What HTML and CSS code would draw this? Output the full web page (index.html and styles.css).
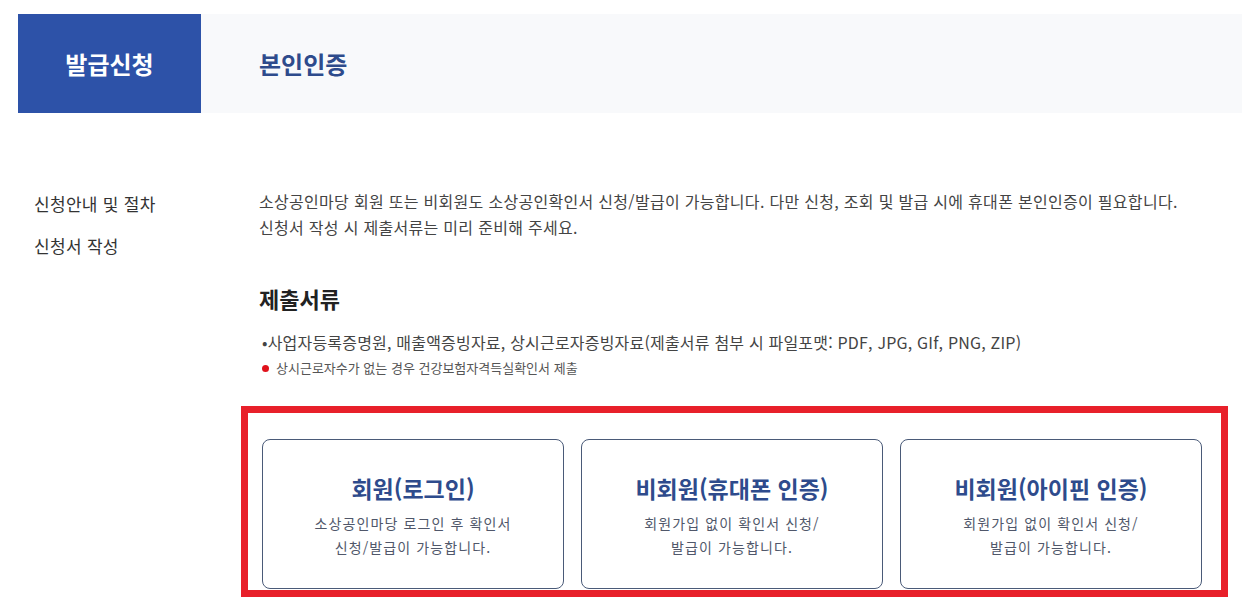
FILE: index.html
```html
<!DOCTYPE html>
<html lang="ko">
<head>
    <meta charset="UTF-8">
    <meta name="viewport" content="width=device-width, initial-scale=1.0">
    <title>소상공인확인서 발급신청</title>
    <link rel="stylesheet" href="styles.css">
</head>
<body>
    <div class="page-head">
        <div class="head-title">발급신청</div>
        <div class="head-step">본인인증</div>
    </div>

    <div class="main">
        <ul class="side-nav">
            <li>신청안내 및 절차</li>
            <li>신청서 작성</li>
        </ul>

        <div class="content">
            <p class="intro">소상공인마당 회원 또는 비회원도 소상공인확인서 신청/발급이 가능합니다. 다만 신청, 조회 및 발급 시에 휴대폰 본인인증이 필요합니다.<br>신청서 작성 시 제출서류는 미리 준비해 주세요.</p>

            <h3 class="docs-title">제출서류</h3>
            <p class="docs-list">•사업자등록증명원, 매출액증빙자료, 상시근로자증빙자료(제출서류 첨부 시 파일포맷: PDF, JPG, GIf, PNG, ZIP)</p>
            <p class="docs-note">상시근로자수가 없는 경우 건강보험자격득실확인서 제출</p>

            <!-- 인증 방식 선택 -->
            <div class="auth-box">
                <div class="auth-card">
                    <strong>회원(로그인)</strong>
                    <p>소상공인마당 로그인 후 확인서<br>신청/발급이 가능합니다.</p>
                </div>
                <div class="auth-card">
                    <strong>비회원(휴대폰 인증)</strong>
                    <p>회원가입 없이 확인서 신청/<br>발급이 가능합니다.</p>
                </div>
                <div class="auth-card">
                    <strong>비회원(아이핀 인증)</strong>
                    <p>회원가입 없이 확인서 신청/<br>발급이 가능합니다.</p>
                </div>
            </div>
        </div>
    </div>
</body>
</html>
```

FILE: styles.css
```css
body {
    margin: 0;
    padding: 0;
    background-color: #ffffff;
    color: #444444;
    font-family: "Noto Sans CJK KR", "Noto Sans", sans-serif;
}

p, h3, ul {
    margin: 0;
    padding: 0;
}

/* 상단 타이틀 */
.page-head {
    display: flex;
    margin: 14px 0 0 18px;
    height: 99px;
    background-color: #f8f9fb;
}

.head-title {
    width: 183px;
    display: flex;
    align-items: center;
    justify-content: center;
    background-color: #2d52a8;
    color: #ffffff;
    font-size: 24px;
    font-weight: 700;
}

.head-step {
    display: flex;
    align-items: center;
    padding-left: 58px;
    color: #2e4b8c;
    font-size: 24px;
    font-weight: 700;
}

.main {
    display: flex;
    margin-top: 75px;
}

.side-nav {
    list-style: none;
    flex: 0 0 225px;
    padding: 3px 0 0 34px;
}

.side-nav li {
    font-size: 17px;
    line-height: 26px;
    letter-spacing: 0.3px;
    color: #333333;
    margin-bottom: 16px;
}

.content {
    flex: 1;
    min-width: 0;
}

.intro {
    font-size: 16px;
    line-height: 26px;
    letter-spacing: 0.3px;
    color: #444444;
}

.docs-title {
    margin-top: 44px;
    font-size: 22px;
    line-height: 28px;
    font-weight: 700;
    color: #222222;
}

.docs-list {
    margin-top: 18px;
    padding-left: 3px;
    font-size: 16px;
    line-height: 24px;
    letter-spacing: 0.2px;
    color: #444444;
}

.docs-note {
    margin-top: 4px;
    font-size: 13px;
    line-height: 20px;
    color: #555555;
    display: flex;
    align-items: center;
    gap: 7px;
}

.docs-note::before {
    content: "";
    width: 7px;
    height: 7px;
    margin-left: 3px;
    border-radius: 50%;
    background-color: #e0121c;
}

.auth-box {
    box-sizing: border-box;
    margin: 28px 0 0 -18px;
    width: 987px;
    border: 7px solid #e8202a;
    padding: 26px 19px 1px 14px;
    display: grid;
    grid-template-columns: repeat(3, 1fr);
    gap: 17px;
}

.auth-card {
    box-sizing: border-box;
    height: 150px;
    border: 1px solid #4a5a78;
    border-radius: 8px;
    padding-top: 33px;
    text-align: center;
}

.auth-card strong {
    display: block;
    font-size: 23px;
    line-height: 30px;
    font-weight: 700;
    color: #2e4b8c;
}

.auth-card p {
    margin-top: 8px;
    font-size: 14px;
    line-height: 24px;
    letter-spacing: 1.1px;
    color: #50576a;
}
```
